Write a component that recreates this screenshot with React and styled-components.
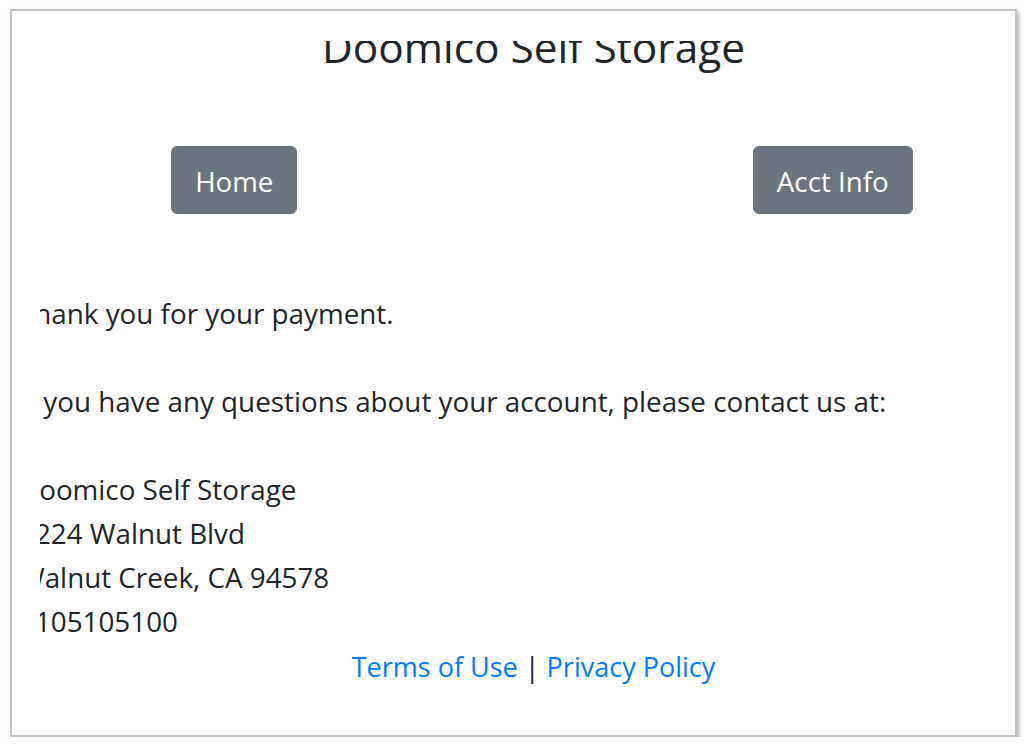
import React from "react";
import styled, { createGlobalStyle } from "styled-components";

const GlobalStyle = createGlobalStyle`
  html, body {
    margin: 0;
    padding: 0;
    background: #ffffff;
  }
  body {
    font-family: "Open Sans", "Noto Sans", sans-serif;
    color: #212529;
  }
`;

const Frame = styled.div`
  box-sizing: border-box;
  margin: 9px 0 0 10px;
  width: 1007px;
  height: 728px;
  background: #ffffff;
  border: 2px solid #c4c4c4;
  box-shadow: 2px 3px 4px rgba(0, 0, 0, 0.3);
  overflow: hidden;
  padding: 30px 0 0 28px;
`;

/* the cropped part of the original page */
const Viewport = styled.div`
  width: 975px;
  height: 680px;
  overflow: hidden;
`;

const Page = styled.div`
  width: 1029px;
  margin-left: -21px;
  font-size: 27.8px;
  line-height: 44px;
`;

const Title = styled.h1`
  margin: -19px 0 0;
  font-size: 42.4px;
  font-weight: 400;
  line-height: 50px;
  text-align: center;
  color: #212529;
`;

const ButtonRow = styled.div`
  display: grid;
  grid-template-columns: 1fr 1fr;
  justify-items: center;
  margin: 74px -84px 0;
`;

const Button = styled.button`
  box-sizing: border-box;
  height: 68px;
  padding: 1px 23px 0;
  font-family: inherit;
  font-size: 27.7px;
  line-height: 66px;
  color: #ffffff;
  background: #6c757d;
  border: 1px solid #6c757d;
  border-radius: 6px;
  cursor: pointer;
`;

const Message = styled.p`
  margin: 0 0 44px;
  &:first-of-type {
    margin-top: 77px;
  }
`;

const Address = styled.address`
  font-style: normal;
`;

const Line = styled.div``;

const Footer = styled.div`
  margin-top: 2px;
  text-align: center;
  font-size: 27px;
`;

const Link = styled.a`
  color: #007bff;
  text-decoration: none;
`;

export default function App() {
  return (
    <>
      <GlobalStyle />
      <Frame>
        <Viewport>
          <Page>
            <Title>Doomico Self Storage</Title>
            <ButtonRow>
              <Button>Home</Button>
              <Button>Acct Info</Button>
            </ButtonRow>
            <Message>Thank you for your payment.</Message>
            <Message>
              If you have any questions about your account, please contact us at:
            </Message>
            <Address>
              <Line>Doomico Self Storage</Line>
              <Line>1224 Walnut Blvd</Line>
              <Line>Walnut Creek, CA 94578</Line>
              <Line>5105105100</Line>
            </Address>
            <Footer>
              <Link href="#">Terms of Use</Link> | <Link href="#">Privacy Policy</Link>
            </Footer>
          </Page>
        </Viewport>
      </Frame>
    </>
  );
}
